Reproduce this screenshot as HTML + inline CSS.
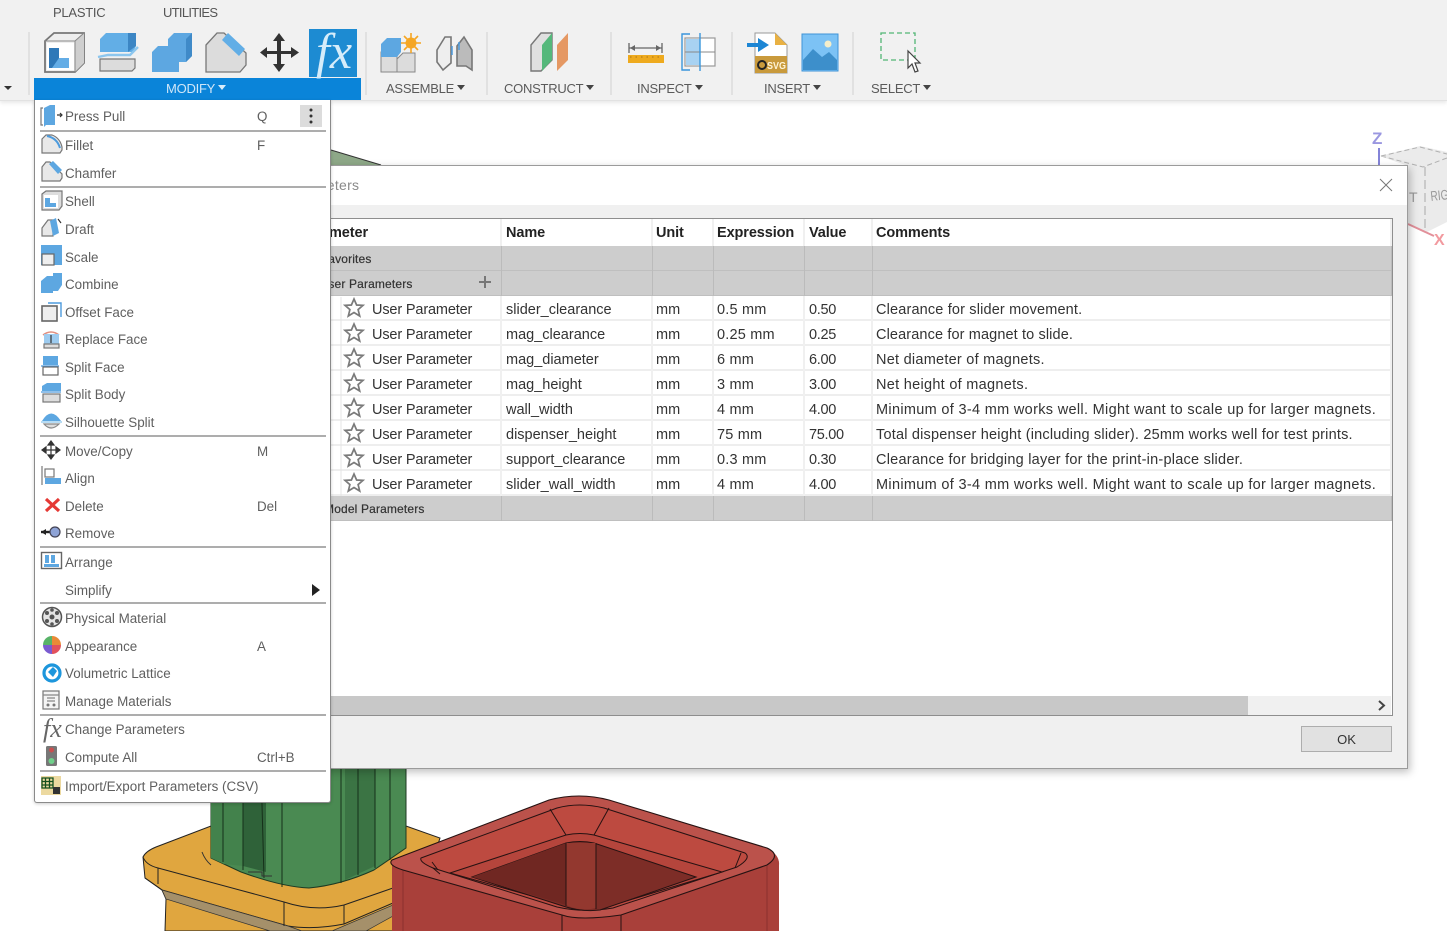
<!DOCTYPE html>
<html><head><meta charset="utf-8"><title>Change Parameters</title>
<style>
html,body{margin:0;padding:0;width:1447px;height:931px;overflow:hidden;background:#fff;font-family:"Liberation Sans",sans-serif}
#all{position:absolute;left:0;top:0;width:1447px;height:931px;overflow:hidden;filter:blur(.35px)}
.scene,.ov{position:absolute;left:0;top:0}
.scene{z-index:1}.ov{z-index:9;pointer-events:none}
#tb{position:absolute;left:0;top:0;width:1447px;height:100px;background:#f1f1f1;border-bottom:1px solid #e2e2e2;box-shadow:0 2px 4px #e8e8e8;z-index:3}
.tab,.lb{position:absolute;font-size:13px;color:#555;letter-spacing:-.25px;white-space:nowrap;line-height:16px}
.tab{top:5px}.lb{top:81px;color:#5a5a5a}
.lb i{display:inline-block;width:0;height:0;border:4px solid transparent;border-top:5px solid #444;border-bottom:0;margin-left:3px;vertical-align:3px}
#mb{position:absolute;left:34px;top:78px;width:327px;height:22px;background:#0a84d9}
#mb span{position:absolute;left:132px;top:3px;color:#cfe6f8;font-size:13px;letter-spacing:-.25px;line-height:16px}
#mb i{display:inline-block;width:0;height:0;border:4px solid transparent;border-top:5px solid #d8ecfa;border-bottom:0;margin-left:3px;vertical-align:3px}
#dlg{position:absolute;left:100px;top:165px;width:1307px;height:602px;background:#f0f0f0;border:1px solid #9b9b9b;border-left:0;box-shadow:2px 3px 8px rgba(0,0,0,.25);z-index:4}
#hd{position:absolute;left:0;top:0;width:1307px;height:39px;background:#fff}
#ttl{position:absolute;left:184px;top:11px;font-size:14px;color:#8a8a8a;letter-spacing:.3px}
#tw{position:absolute;left:0;top:52px;width:1293px;height:498px;background:#fff;border:1px solid #8e8e8e;border-left:0;box-sizing:border-box;overflow:hidden}
table{border-collapse:collapse;table-layout:fixed;width:1292px;position:absolute;left:0;top:0}
td,th{height:25px;padding:4px 0 0 4px;box-sizing:border-box;font-size:14.5px;line-height:21px;color:#333;white-space:nowrap;overflow:hidden;text-align:left;border-right:2px solid #f0f0f0;box-shadow:inset 0 -2px #eee}
td:nth-child(3),td:nth-child(4),td:nth-child(6),th:nth-child(3),th:nth-child(4),th:nth-child(6){padding-left:3px}
td:nth-child(5){letter-spacing:-.3px}
td:nth-child(4){letter-spacing:.2px}
th{height:27px;padding-top:2px;line-height:25px;font-size:14.5px;color:#222;border-right:2px solid #f0f0f0;letter-spacing:-.1px;box-shadow:none}
tr.g td{background:#cdcdcd;font-size:12px;line-height:24px;padding-top:1px;padding-left:0;color:#333;font-weight:400;box-shadow:inset 0 -1px #bfbfbf;border-right:1px solid #bbb;-webkit-text-stroke:.2px #333;letter-spacing:.15px}
td.p{padding-left:272px;letter-spacing:-.15px}
td.r{text-align:right}
#sb{position:absolute;left:0;top:477px;width:1291px;height:20px;background:#f0f0f0}
#sb b{position:absolute;left:0;top:0;width:1148px;height:20px;background:#c8c8c8}
#ok{position:absolute;left:1201px;top:560px;width:91px;height:26px;box-sizing:border-box;background:#e1e1e1;border:1px solid #adadad;text-align:center;font-size:13px;line-height:26px;color:#333}
#menu{position:absolute;left:34px;top:100px;width:295px;height:702px;background:#fff;border:1px solid #8a8a8a;border-top:0;border-radius:0 0 3px 3px;box-shadow:0 1px 3px rgba(0,0,0,.2);z-index:6}
#menu div{position:absolute;font-size:13.4px;line-height:20px;height:20px;color:#5f5f5f;white-space:nowrap;left:30px;margin-top:1px}
#menu div.k{left:222px}
#menu hr{position:absolute;left:5px;width:286px;margin:0;border:0;height:2px;background:#adadad}
#dots{position:absolute;left:265px;top:5px;width:22px;height:22px;background:#dcdcdc}
</style></head><body><div id="all">
<svg class="scene" width="1447" height="931" viewBox="0 0 1447 931">
<path d="M331 150L381 165H331Z" fill="#8ea888"/>
<path d="M331 150L381 165" stroke="#333" stroke-width="1" fill="none"/>
<!-- view cube -->
<path d="M1380 156L1420 146L1447 152V222L1425 233L1408 225V166Z" fill="#ebebeb"/>
<path d="M1381 156L1423 167L1447 158M1381 156L1420 147L1447 154" fill="none" stroke="#b0b0b0" stroke-dasharray="5 3"/>
<path d="M1425 167V230" stroke="#aaa" stroke-dasharray="9 4" fill="none"/>
<text x="1431" y="201" font-size="14" fill="#999" font-family="Liberation Sans" textLength="18" lengthAdjust="spacingAndGlyphs" transform="rotate(-6 1431 201)">RIG</text>
<text x="1409" y="202" font-size="14" fill="#999" font-family="Liberation Sans">T</text>
<path d="M1408 224L1434 236" stroke="#e2909a" stroke-width="2"/>
<text x="1434" y="245" font-size="16" font-weight="700" fill="#f29a9f" font-family="Liberation Sans">X</text>
<text x="1372" y="144" font-size="17" font-weight="700" fill="#9a97e0" font-family="Liberation Sans">Z</text>
<path d="M1379 148V166" stroke="#8484d8" stroke-width="2"/>
<!-- yellow base -->
<path d="M143 857Q146 851 156 847L211 826H406L440 838L410 931H165L166 899L162 890L145 878Z" fill="#e0a63f" stroke="#222" stroke-width="1"/>
<path d="M143 857Q146 865 158 868L284 902Q314 912 344 905L393 888" fill="none" stroke="#222"/>
<path d="M145 878L162 890L288 926Q314 930 344 924L393 903" fill="none" stroke="#222"/>
<path d="M162 890L166 899L270 931H302L288 926Z" fill="#a5906a" stroke="#333" stroke-width=".7"/>
<path d="M332 931L393 905V916L366 931Z" fill="#a5906a" stroke="#333" stroke-width=".7"/>
<path d="M284 902V926M344 905V924M158 868V884" stroke="#222" fill="none"/>
<!-- green -->
<path d="M211 768H406V848L374 870Q341 885 309 888Q282 887 241 872L211 858Z" fill="#4a8a52" stroke="#1e3a22" stroke-width="1"/>
<path d="M211 768H243V866L224 864L211 858Z" fill="#43824c"/>
<path d="M243 768H266V872L243 866Z" fill="#2f6239"/>
<path d="M345 768H375V866L345 880Z" fill="#3b7444"/>
<path d="M223 768V862M243 768V870M261 768L264 878M282 768L282 887M341 768V883M358 768V875M375 768V868M390 768V860" stroke="#16301a" fill="none"/>
<path d="M202 852Q205 860 211 865M248 872H262V876H272" stroke="#333" fill="none"/>
<!-- red box -->
<path d="M392 860L549 800Q579 792 609 800L767 848Q780 855 779 865V931H392Z" fill="#a9403a"/>
<path d="M403 870V931M767 866V931" stroke="#8b312d" fill="none"/>
<path d="M392 860L549 800Q579 792 609 800L767 848Q782 855 767 865L621 915Q579 921 562 915L403 870Q387 865 392 860Z" fill="#bb524b" stroke="#261212" stroke-width="1.1"/>
<path d="M421 858L557 808Q579 802 604 808L745 853Q752 858 737 867L613 908Q583 913 557 907L433 868Q419 862 421 858Z" fill="#bd4a40" stroke="#261212" stroke-width="1"/>
<path d="M450 873L566 835Q580 832 594 835L722 872L613 905Q583 911 557 903Z" fill="#b5453c" stroke="#261212" stroke-width="1"/>
<path d="M472 877L566 843Q580 840 594 843L696 877L600 910Q583 912 566 907Z" fill="#7d2d27" stroke="#261212" stroke-width="1"/>
<path d="M472 877L566 843V905Z" fill="#702722"/><path d="M566 843H596V908Q580 912 566 905Z" fill="#93382f"/>
<path d="M566 843V906M596 843V909M550 809L566 835M609 808L594 835M433 868L440 874M432 862L438 870M735 868L741 853M562 915V931M621 915V931" stroke="#261212" fill="none"/>
</svg>

<div id="tb">
<span class="tab" style="left:53px">PLASTIC</span><span class="tab" style="left:163px;letter-spacing:-.7px">UTILITIES</span>
<div id="mb"><span>MODIFY<i></i></span></div>
<span class="lb" style="left:386px">ASSEMBLE<i></i></span>
<span class="lb" style="left:504px">CONSTRUCT<i></i></span>
<span class="lb" style="left:637px">INSPECT<i></i></span>
<span class="lb" style="left:764px">INSERT<i></i></span>
<span class="lb" style="left:871px">SELECT<i></i></span>
</div>

<div id="dlg">
<div id="hd"><span id="ttl">Parameters</span></div>
<div id="tw">
<table>
<colgroup><col style="width:401px"><col style="width:151px"><col style="width:61px"><col style="width:91px"><col style="width:68px"><col></colgroup>
<tr><th style="text-align:right;padding-right:132px;padding-left:0">Parameter</th><th>Name</th><th>Unit</th><th>Expression</th><th>Value</th><th>Comments</th></tr>
<tr class="g"><td class="r" style="padding-right:129px">Favorites</td><td></td><td></td><td></td><td></td><td></td></tr>
<tr class="g"><td class="r" style="padding-right:88px">User Parameters</td><td></td><td></td><td></td><td></td><td></td></tr>
<tr><td class="p">User Parameter</td><td>slider_clearance</td><td>mm</td><td>0.5 mm</td><td>0.50</td><td style="letter-spacing:.16px">Clearance for slider movement.</td></tr>
<tr><td class="p">User Parameter</td><td>mag_clearance</td><td>mm</td><td>0.25 mm</td><td>0.25</td><td style="letter-spacing:.12px">Clearance for magnet to slide.</td></tr>
<tr><td class="p">User Parameter</td><td>mag_diameter</td><td>mm</td><td>6 mm</td><td>6.00</td><td style="letter-spacing:.25px">Net diameter of magnets.</td></tr>
<tr><td class="p">User Parameter</td><td>mag_height</td><td>mm</td><td>3 mm</td><td>3.00</td><td style="letter-spacing:.29px">Net height of magnets.</td></tr>
<tr><td class="p">User Parameter</td><td>wall_width</td><td>mm</td><td>4 mm</td><td>4.00</td><td style="letter-spacing:.32px">Minimum of 3-4 mm works well. Might want to scale up for larger magnets.</td></tr>
<tr><td class="p">User Parameter</td><td>dispenser_height</td><td>mm</td><td>75 mm</td><td>75.00</td><td style="letter-spacing:.2px">Total dispenser height (including slider). 25mm works well for test prints.</td></tr>
<tr><td class="p">User Parameter</td><td>support_clearance</td><td>mm</td><td>0.3 mm</td><td>0.30</td><td style="letter-spacing:.24px">Clearance for bridging layer for the print-in-place slider.</td></tr>
<tr><td class="p">User Parameter</td><td>slider_wall_width</td><td>mm</td><td>4 mm</td><td>4.00</td><td style="letter-spacing:.32px">Minimum of 3-4 mm works well. Might want to scale up for larger magnets.</td></tr>
<tr class="g"><td class="r" style="padding-right:76px">Model Parameters</td><td></td><td></td><td></td><td></td><td></td></tr>
</table>
<div id="sb"><b></b></div>
</div>
<div id="ok">OK</div>
</div>

<div id="menu">
<div style="top:6px">Press Pull</div><div class="k" style="top:6px">Q</div>
<span id="dots"></span>
<hr style="top:30px">
<div style="top:35px">Fillet</div><div class="k" style="top:35px">F</div>
<div style="top:63px">Chamfer</div>
<hr style="top:86px">
<div style="top:91px">Shell</div>
<div style="top:119px">Draft</div>
<div style="top:147px">Scale</div>
<div style="top:174px">Combine</div>
<div style="top:202px">Offset Face</div>
<div style="top:229px">Replace Face</div>
<div style="top:257px">Split Face</div>
<div style="top:284px">Split Body</div>
<div style="top:312px">Silhouette Split</div>
<hr style="top:335px">
<div style="top:341px">Move/Copy</div><div class="k" style="top:341px">M</div>
<div style="top:368px">Align</div>
<div style="top:396px">Delete</div><div class="k" style="top:396px">Del</div>
<div style="top:423px">Remove</div>
<hr style="top:446px">
<div style="top:452px">Arrange</div>
<div style="top:480px">Simplify</div>
<hr style="top:502px">
<div style="top:508px">Physical Material</div>
<div style="top:536px">Appearance</div><div class="k" style="top:536px">A</div>
<div style="top:563px">Volumetric Lattice</div>
<div style="top:591px">Manage Materials</div>
<hr style="top:614px">
<div style="top:619px">Change Parameters</div>
<div style="top:647px">Compute All</div><div class="k" style="top:647px">Ctrl+B</div>
<hr style="top:670px">
<div style="top:676px">Import/Export Parameters (CSV)</div>
</div>

<svg class="ov" width="1447" height="931" viewBox="0 0 1447 931">
<defs>
<path id="star" d="M0-9L2.6-3 9-2.6 4.1 1.6 5.7 8 0 4.5-5.7 8-4.1 1.6-9-2.6-2.6-3Z" fill="#fff" stroke="#7a7a7a" stroke-width="1.7"/>
</defs>
<!-- toolbar separators -->
<path d="M29 32V95M366 32V95M487 32V95M611 32V95M732 32V95M853 32V95" stroke="#dcdcdc" stroke-width="1.5"/>
<path d="M4 86h8l-4 4z" fill="#333"/>
<!-- press pull -->
<path d="M45 41L54 33H84V63L75 72H45Z" fill="#eee" stroke="#777" stroke-width="1.8"/><path d="M75 41L84 33V63L75 72Z" fill="#cfcfcf"/><path d="M45 41H75V72M75 41L84 33" fill="none" stroke="#888" stroke-width="1"/>
<rect x="47" y="43" width="27" height="27" fill="#fff"/>
<path d="M49 48H59V58H69V68H49Z" fill="#64ade6"/><path d="M49 48H59V58L52 68H49Z" fill="#2e78b8"/>
<!-- split body -->
<path d="M100 59H135V68L132 71H100Z" fill="#dcdcdc" stroke="#777" stroke-width="1.2"/>
<path d="M100 39L106 33H136V46L133 52H100Z" fill="#62aee6"/><path d="M128 33H136V46L128 52Z" fill="#3c86c4"/>
<path d="M98 57L108 55H130L138 47" fill="none" stroke="#8cc6ee" stroke-width="2.4"/>
<!-- combine -->
<path d="M152 52L158 46H168V39L174 33H192V56L186 62H179V72H152Z" fill="#5da7e1"/><path d="M186 39L192 33V56L186 62Z" fill="#3f8ac8"/>
<!-- chamfer -->
<path d="M206 45L217 33H224L246 53V65L240 72H206Z" fill="#dcdcdc" stroke="#777" stroke-width="1.3"/>
<path d="M222 40L228 33L245 49L239 56Z" fill="#62aee6"/>
<!-- move -->
<path d="M279 33L285 41H281V51H291V47L299 52.500L291 58V54H281V64H285L279 72L273 64H277V54H267V58L260 52.500L267 47V51H277V41H273Z" fill="#333"/>
<!-- fx -->
<rect x="309" y="29" width="48" height="48" fill="#1d8bd2"/>
<text x="316" y="68" font-family="Liberation Serif" font-style="italic" font-size="50" fill="#d5ecfa">fx</text>
<!-- assemble -->
<path d="M381 52H397V72H381ZM397 59L403 53H415V72H397Z" fill="#dcdcdc" stroke="#888"/><path d="M381 44L387 38H401V52L397 57H381Z" fill="#5da7e1"/>
<circle cx="411" cy="43" r="5.500" fill="#f5a623"/><path d="M411 33V53M401 43H421M404 36L418 50M418 36L404 50" stroke="#f5a623" stroke-width="1.600"/>
<!-- joint -->
<path d="M437 50L445 37H451V63L443 70L437 62Z" fill="#eee" stroke="#777" stroke-width="1.6"/><path d="M457 46L464 37L472 50V70L466 66H457Z" fill="#bbb" stroke="#777" stroke-width="1.6"/><path d="M452 46V55M459 42V50" stroke="#4d9bdd" stroke-width="1.5"/>
<!-- construct -->
<path d="M531 45L541 33H552V60L541 71H531Z" fill="#e0e0e0" stroke="#777" stroke-width="1.4"/><path d="M542 45L552 33V60L542 71Z" fill="#55b87b"/><path d="M557 45L568 33V60L557 71Z" fill="#e59863"/>
<!-- inspect -->
<path d="M629 48H662M629 43V53M662 43V53" stroke="#666" stroke-width="1.3"/><path d="M630 48l5-3v6zM661 48l-5-3v6z" fill="#666"/>
<rect x="628" y="55" width="36" height="8" fill="#eeaa1e"/><path d="M630 57H662" stroke="#a8741a" stroke-dasharray="1.500 4"/>
<rect x="685" y="38" width="30" height="28" fill="#fff" stroke="#999" stroke-width="1.2"/><rect x="686" y="39" width="14" height="26" fill="#a8d2f2"/><path d="M700 38V66M685 52H715" stroke="#888"/><path d="M690 34H682V70H690M700 33V71" fill="none" stroke="#3a96dc" stroke-width="1.4"/>
<!-- insert svg -->
<path d="M755 33H775L787 45V73H755Z" fill="#fff" stroke="#999"/><path d="M775 33L787 45H775Z" fill="#e9b143"/><rect x="755" y="56" width="32" height="17" fill="#c99a3c"/>
<text x="767" y="69" font-family="Liberation Sans" font-weight="700" font-size="10.500" fill="#fff5d8" textLength="19" lengthAdjust="spacingAndGlyphs">SVG</text><circle cx="762" cy="65" r="4" fill="#c99a3c" stroke="#222" stroke-width="2"/>
<path d="M747 43H758V38L769 45L758 52V47H747Z" fill="#1d86d4"/>
<!-- image -->
<rect x="802" y="34" width="36" height="37" fill="#7cc2f5" stroke="#3f94d6"/><circle cx="828" cy="44" r="3.500" fill="#f4eecb"/><path d="M803 70V60L813 49L822 57L829 52L837 60V70Z" fill="#3d8fcb"/>
<!-- select -->
<rect x="881" y="33" width="34" height="27" fill="none" stroke="#52b675" stroke-width="1.3" stroke-dasharray="5 3"/>
<path d="M908 51V68L912 64L915 72L918 71L915 63L920 63Z" fill="#fff" stroke="#444" stroke-width="1.2"/>
<!-- menu icons -->
<g stroke-width="1.2">
<path d="M43 108H41V125H43" fill="none" stroke="#777"/><path d="M44 108L50 105H55V125H46L44 127Z" fill="#5da7e1"/><path d="M57 115H62M60 113L62 115L60 117" stroke="#333" fill="none"/>
<path d="M42 139L46 135H52Q60 138 62 147V150L60 153H42Z" fill="#e8e8e8" stroke="#777"/><path d="M47 136Q57 138 60 148" stroke="#4d9bdd" stroke-width="2" fill="none"/>
<path d="M42 167L46 162H50L62 174V178L60 181H42Z" fill="#e8e8e8" stroke="#777"/><path d="M49 164L53 161L62 170L58 174Z" fill="#5da7e1"/>
<path d="M42 194L46 191H62V206L59 210H42Z" fill="#ddd" stroke="#777"/><rect x="44" y="195" width="14" height="13" fill="#fff"/><path d="M45 198H50V203H56V207H45Z" fill="#5da7e1"/>
<path d="M42 228L48 220H53V236H42Z" fill="#e8e8e8" stroke="#777"/><path d="M50 221L56 218L59 233L53 236Z" fill="#5da7e1"/><path d="M58 219L61 223" stroke="#333"/>
<rect x="41" y="245" width="21" height="20" fill="#5da7e1"/><rect x="42" y="254" width="12" height="11" fill="#eee" stroke="#666"/>
<path d="M41 281L47 276H53V273L59 273H62V285L58 291H53V293H41Z" fill="#5da7e1"/>
<rect x="42" y="306" width="15" height="15" fill="#eee" stroke="#666" stroke-width="1.6"/><path d="M48 303H61V317" fill="none" stroke="#4d9bdd" stroke-width="1.4"/>
<path d="M43 335Q51 329 59 335" stroke="#e08f80" fill="none" stroke-width="1.5"/><rect x="44" y="334" width="15" height="10" fill="#9dcbef"/><path d="M51 335V343" stroke="#333"/><rect x="44" y="344" width="15" height="4" fill="#ddd" stroke="#777"/>
<rect x="43" y="356" width="15" height="9" fill="#5da7e1"/><path d="M41 366H59" stroke="#4d9bdd"/><rect x="43" y="367" width="15" height="8" fill="#fff" stroke="#666"/>
<path d="M42 386L47 383H61V391H42Z" fill="#5da7e1"/><path d="M41 392H61" stroke="#4d9bdd"/><rect x="43" y="394" width="17" height="8" fill="#ddd" stroke="#777"/>
<path d="M42 421Q51 406 61 421Z" fill="#5da7e1"/><path d="M41 422H62" stroke="#8cc6ee"/><path d="M44 424Q51 432 59 424Z" fill="#ddd" stroke="#888"/>
<path d="M51 442V458M43 450H59M51 441l-3 4h6zM51 459l-3-4h6zM42 450l4-3v6zM60 450l-4-3v6z" fill="#333" stroke="#333"/>
<path d="M42 466V485" stroke="#777"/><rect x="45" y="469" width="9" height="8" fill="#fff" stroke="#777"/><rect x="45" y="478" width="16" height="6" fill="#5da7e1"/>
<path d="M46 499L59 511M59 499L46 511" stroke="#e53935" stroke-width="3.200"/>
<path d="M41 532H50" stroke="#222" stroke-width="2.400"/><path d="M41 532l5-3v6z" fill="#222"/><circle cx="55" cy="532" r="5" fill="#8ea3d6" stroke="#445"/>
<rect x="41.500" y="552.500" width="20" height="16" fill="#fff" stroke="#666" stroke-width="1.400"/><rect x="45" y="555" width="4" height="8" fill="#5da7e1"/><rect x="51" y="555" width="4" height="8" fill="#5da7e1"/><rect x="44" y="564" width="15" height="3" fill="#5da7e1"/>
<circle cx="52" cy="617" r="9.500" fill="#e4e4e4" stroke="#555" stroke-width="1.500"/><g fill="#555"><circle cx="52" cy="617" r="2.500"/><circle cx="47" cy="613" r="2"/><circle cx="57" cy="613" r="2"/><circle cx="47" cy="621" r="2"/><circle cx="57" cy="621" r="2"/><circle cx="52" cy="610" r="1.800"/><circle cx="52" cy="624" r="1.800"/></g>
<path d="M52 645V636A9 9 0 0 1 61 645Z" fill="#e98a37"/><path d="M52 645H61A9 9 0 0 1 52 654Z" fill="#e2515d"/><path d="M52 645V654A9 9 0 0 1 43 645Z" fill="#7a5bd0"/><path d="M52 645H43A9 9 0 0 1 52 636Z" fill="#58b368"/>
<circle cx="52" cy="673" r="8" fill="#fff" stroke="#1d96dc" stroke-width="3.200"/><path d="M48 672L53 667L57 671L53 677Z" fill="#1d96dc"/>
<rect x="43" y="691" width="16" height="18" fill="#f4f4f4" stroke="#777"/><path d="M43 695H59M47 698H55M47 701H55" stroke="#888"/><circle cx="48" cy="705" r="1.500" fill="#777"/><circle cx="54" cy="705" r="1.500" fill="#777"/>
<text x="43" y="737" font-family="Liberation Serif" font-style="italic" font-size="26" fill="#666" stroke="none">fx</text>
<rect x="46" y="746" width="11" height="20" rx="1.500" fill="#777"/><circle cx="51.500" cy="750" r="2.500" fill="#c94f4f"/><circle cx="51.500" cy="761" r="3" fill="#6fd08a"/>
<rect x="41" y="776" width="20" height="19" fill="#ecd9a0"/><path d="M42 778H53V788H42ZM42 781.500H53M42 785H53M45.500 778V788M49.500 778V788" fill="none" stroke="#14501e" stroke-width="1.300"/><rect x="53" y="787" width="7" height="7" fill="#333"/>
</g>
<circle cx="311" cy="110" r="1.500" fill="#333"/><circle cx="311" cy="116" r="1.500" fill="#333"/><circle cx="311" cy="122" r="1.500" fill="#333"/>
<path d="M312 584L320 590L312 596Z" fill="#222"/>
<!-- dialog glyphs -->
<path d="M1380 179L1392 191M1392 179L1380 191" stroke="#777" stroke-width="1"/>
<path d="M485 276V288M479 282H491" stroke="#777" stroke-width="2"/>
<path d="M341 297V496" stroke="#e4e4e4" stroke-width="1"/>
<use href="#star" x="354" y="308"/><use href="#star" x="354" y="333"/><use href="#star" x="354" y="358"/><use href="#star" x="354" y="383"/><use href="#star" x="354" y="408"/><use href="#star" x="354" y="433"/><use href="#star" x="354" y="458"/><use href="#star" x="354" y="483"/>
<path d="M1379 701L1384 705.500L1379 710" fill="none" stroke="#444" stroke-width="2"/>
</svg>
</div></body></html>
